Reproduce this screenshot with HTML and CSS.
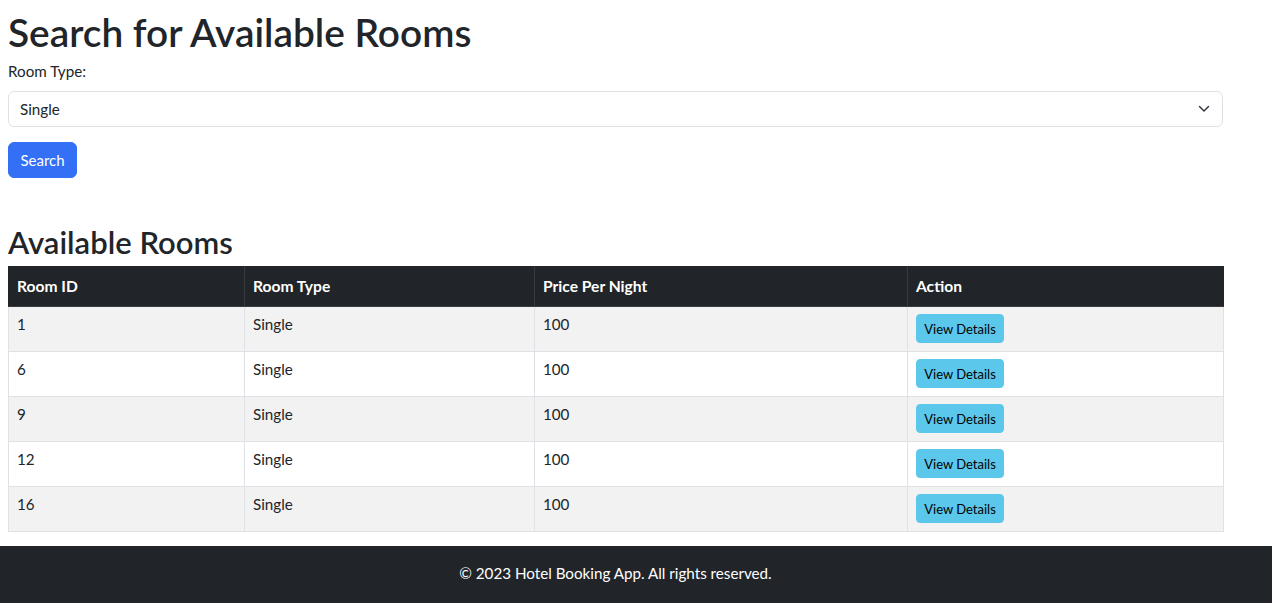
FILE: index.html
```html
<!DOCTYPE html>
<html lang="en">
<head>
<meta charset="utf-8">
<title>Hotel Booking App</title>
<link rel="stylesheet" href="styles.css">
</head>
<body>
<main class="container">
  <h1 class="title">Search for Available Rooms</h1>
  <form class="search-form">
    <label class="form-label" for="roomType">Room Type:</label>
    <div class="select-wrap">
      <select id="roomType" class="form-select">
        <option>Single</option>
        <option>Double</option>
        <option>Suite</option>
      </select>
      <svg class="chevron" width="12" height="8" viewBox="0 0 12 8" aria-hidden="true"><path d="M1.5 1.5l4.5 4.5 4.5-4.5" fill="none" stroke="#343a40" stroke-width="1.5" stroke-linecap="round" stroke-linejoin="round"/></svg>
    </div>
    <button type="button" class="btn btn-primary">Search</button>
  </form>

  <h2 class="subtitle">Available Rooms</h2>
  <table class="rooms">
    <colgroup>
      <col class="c1"><col class="c2"><col class="c3"><col class="c4">
    </colgroup>
    <thead>
      <tr><th>Room ID</th><th>Room Type</th><th>Price Per Night</th><th>Action</th></tr>
    </thead>
    <tbody>
      <tr class="odd"><td>1</td><td>Single</td><td>100</td><td><button type="button" class="btn-info">View Details</button></td></tr>
      <tr><td>6</td><td>Single</td><td>100</td><td><button type="button" class="btn-info">View Details</button></td></tr>
      <tr class="odd"><td>9</td><td>Single</td><td>100</td><td><button type="button" class="btn-info">View Details</button></td></tr>
      <tr><td>12</td><td>Single</td><td>100</td><td><button type="button" class="btn-info">View Details</button></td></tr>
      <tr class="odd"><td>16</td><td>Single</td><td>100</td><td><button type="button" class="btn-info">View Details</button></td></tr>
    </tbody>
  </table>
</main>
<footer class="footer">
  <div class="footer-inner">© 2023 Hotel Booking App. All rights reserved.</div>
</footer>
</body>
</html>
```

FILE: styles.css
```css
* { box-sizing: border-box; }

html, body {
  margin: 0;
  padding: 0;
  background: #fff;
}

body {
  font-family: Lato, "Open Sans", "Liberation Sans", sans-serif;
  font-size: 15.2px;
  line-height: 24px;
  color: #212529;
}

.container {
  width: 1215px;
  margin-left: 8px;
  padding-top: 8px;
  padding-bottom: 14px;
}

.title {
  margin: 0;
  font-size: 38.8px;
  line-height: 48px;
  font-weight: 600;
}

.search-form {
  margin-top: 3px;
}

.form-label {
  display: block;
  margin-bottom: 8px;
  line-height: 24px;
}

.select-wrap {
  position: relative;
  height: 36px;
}

.form-select {
  display: block;
  width: 100%;
  height: 36px;
  padding: 0 36px 0 11px;
  font: inherit;
  color: #212529;
  background: #fff;
  border: 1px solid #dee2e6;
  border-radius: 6px;
  appearance: none;
  -webkit-appearance: none;
  outline: none;
}

.chevron {
  position: absolute;
  right: 13px;
  top: 14px;
}

.btn {
  display: inline-block;
  font: inherit;
  border: 1px solid transparent;
  border-radius: 6px;
  cursor: pointer;
}

.btn-primary {
  margin-top: 15px;
  width: 69px;
  height: 36px;
  padding: 0;
  font-size: 15px;
  background: #3470f6;
  color: #fff;
  border-color: #3470f6;
}

.subtitle {
  margin: 44px 0 4px;
  font-size: 31px;
  line-height: 40px;
  font-weight: 600;
}

.rooms {
  width: 1215px;
  border-collapse: collapse;
  table-layout: fixed;
}

.c1 { width: 236px; }
.c2 { width: 290px; }
.c3 { width: 373px; }
.c4 { width: 316px; }

.rooms th {
  background: #212529;
  color: #fff;
  text-align: left;
  font-size: 15.6px;
  font-weight: 700;
  padding: 7px 8px 9px;
  line-height: 22px;
  border: 1px solid #373b3e;
  border-top-color: #212529;
  height: 40px;
}

.rooms th:first-child { border-left-color: #212529; }
.rooms th:last-child { border-right-color: #212529; }

.rooms td {
  vertical-align: top;
  padding: 6px 8px 8px;
  line-height: 22px;
  border: 1px solid #dee2e6;
  height: 45px;
}

.rooms tbody tr:last-child td { height: 44px; }

.rooms tr.odd td {
  background: #f2f2f2;
}

.btn-info {
  display: block;
  margin-top: 1px;
  width: 88px;
  height: 29px;
  padding: 0;
  font: inherit;
  font-size: 13px;
  line-height: 20px;
  color: #000;
  background: #5bc7eb;
  border: 1px solid #5bc7eb;
  border-radius: 4px;
  cursor: pointer;
}

.footer {
  background: #212529;
  color: #fff;
  padding: 15px 0 18px;
}

.footer-inner {
  width: 1215px;
  margin-left: 8px;
  text-align: center;
  line-height: 24px;
}
```
